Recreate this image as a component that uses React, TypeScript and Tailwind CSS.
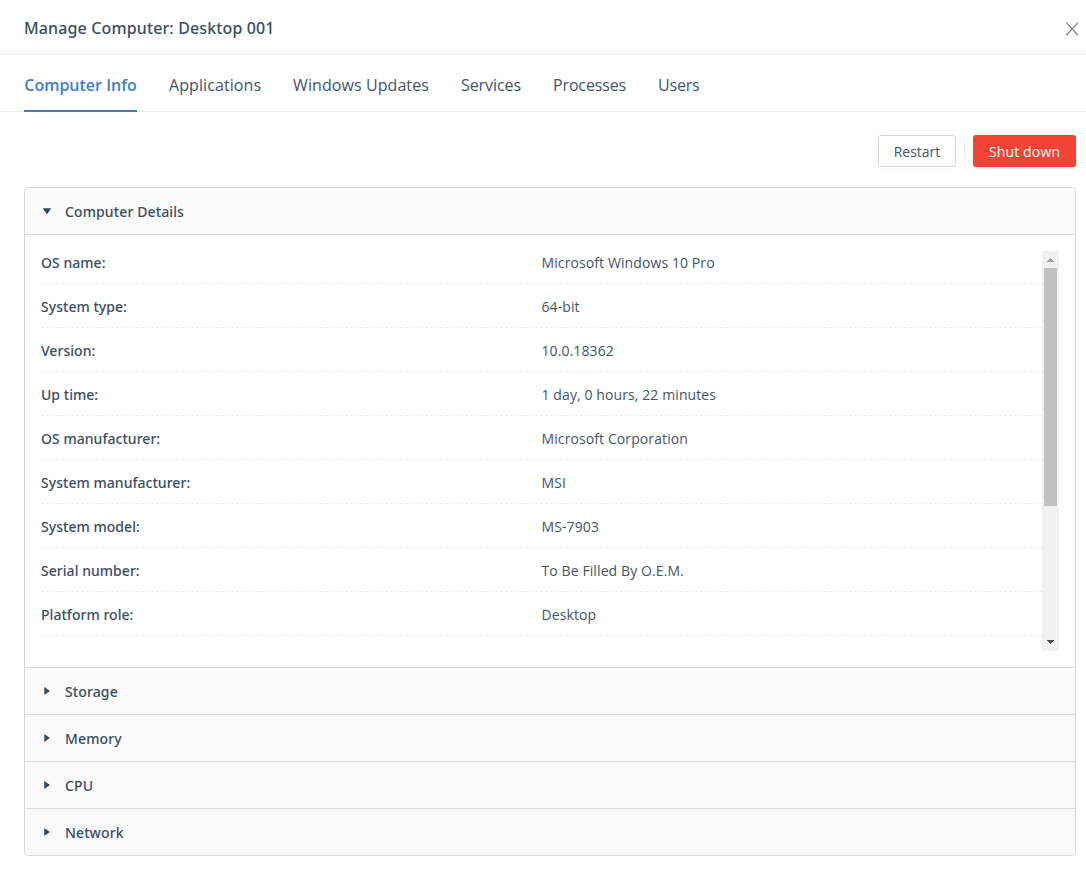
import React, { useState } from "react";
import clsx from "clsx";

const tabs = [
    { label: "Computer Info", className: "w-[113px]" },
    { label: "Applications", className: "w-[92px] tracking-[0.08px]" },
    { label: "Windows Updates", className: "w-[136px] tracking-[0.08px]" },
    { label: "Services", className: "w-[60px] tracking-[-0.08px]" },
    { label: "Processes", className: "w-[73px] tracking-[-0.16px]" },
    { label: "Users", className: "w-[41px] tracking-[-0.2px]" },
];

const details = [
    { label: "OS name:", value: "Microsoft Windows 10 Pro" },
    { label: "System type:", value: "64-bit" },
    { label: "Version:", value: "10.0.18362" },
    { label: "Up time:", value: "1 day, 0 hours, 22 minutes" },
    { label: "OS manufacturer:", value: "Microsoft Corporation" },
    { label: "System manufacturer:", value: "MSI" },
    { label: "System model:", value: "MS-7903" },
    { label: "Serial number:", value: "To Be Filled By O.E.M." },
    { label: "Platform role:", value: "Desktop" },
];

const sections = ["Storage", "Memory", "CPU", "Network"];

const Caret = ({ open = false }: { open?: boolean }) => (
    <svg width="10" height="10" viewBox="0 0 10 10" className="shrink-0 fill-[#34495e]">
        {open ? <path d="M.8 2.2h8.4L5.6 7.6a.7.7 0 0 1-1.2 0z" /> : <path d="M2.3 1v8l5-3.5a.6.6 0 0 0 0-1z" />}
    </svg>
);

const PanelHeader = ({ title, open }: { title: string; open?: boolean }) => (
    <button className="flex h-[46px] w-full items-center gap-[13px] bg-[#fafafa] pl-[17px] text-left font-['Noto_Sans',sans-serif] font-medium tracking-[0.12px]">
        <Caret open={open} />
        <span className="pt-[2px]">{title}</span>
    </button>
);

const Scrollbar = () => (
    <div className="flex w-[17px] shrink-0 flex-col items-center bg-[#f1f1f1]">
        <svg width="17" height="17" viewBox="0 0 17 17" shapeRendering="crispEdges" className="shrink-0 fill-[#a3a3a3]">
            <path d="M8 7h1v1h1v1h1v1h1v1H5v-1h1V9h1V8h1z" />
        </svg>
        <div className="h-[238px] w-[13px] bg-[#c1c1c1]" />
        <svg width="17" height="17" viewBox="0 0 17 17" shapeRendering="crispEdges" className="mt-auto shrink-0 fill-[#505050]">
            <path d="M5 6h7v1h-1v1h-1v1H9v1H8V9H7V8H6V7H5z" />
        </svg>
    </div>
);

export default function App() {
    const [active, setActive] = useState("Computer Info");

    return (
        <div className="h-[872px] w-[1086px] overflow-hidden bg-white font-['Open_Sans','Noto_Sans',sans-serif] text-[14px] leading-[22px] text-[#3b4d61]">
            <header className="flex h-[55px] items-center justify-between border-b border-[#ececec] pr-[7px] pl-6">
                <h1 className="pt-[2px] font-['Noto_Sans',sans-serif] text-[16px] font-medium tracking-[0.13px]">
                    Manage Computer: Desktop 001
                </h1>
                <button aria-label="Close" className="pt-[3px]">
                    <svg width="14" height="14" viewBox="0 0 14 14" className="fill-none stroke-[#858585] stroke-[1.3]">
                        <path d="M1.3.6l11.6 12.6M12.9.6L1.3 13.2" />
                    </svg>
                </button>
            </header>

            <nav className="flex h-[57px] gap-8 border-b border-[#ececec] pl-6 text-[16px] text-[#445568]">
                {tabs.map((tab) => (
                    <button
                        key={tab.label}
                        onClick={() => setActive(tab.label)}
                        className={clsx(
                            "h-[57px] border-b-2 pt-[5px] whitespace-nowrap",
                            tab.className,
                            active === tab.label ? "border-[#3f7dcd] font-semibold text-[#3f7dcd]" : "border-transparent",
                        )}
                    >
                        {tab.label}
                    </button>
                ))}
            </nav>

            <main className="pt-[23px] pr-[10px] pl-6">
                <div className="mb-5 flex h-8 items-center justify-end gap-2">
                    <button className="h-8 w-[78px] rounded-[3px] border border-[#d9d9d9] pt-[2px] text-[#445568] shadow-[0_2px_0_rgba(0,0,0,0.015)]">
                        Restart
                    </button>
                    <span className="h-[14px] w-px bg-[#e8e8e8]" />
                    <button className="h-8 w-[103px] rounded-[3px] bg-[#f44336] pt-[2px] tracking-[0.15px] text-white shadow-[0_2px_0_rgba(0,0,0,0.045)]">
                        Shut down
                    </button>
                </div>

                <div className="overflow-hidden rounded-[4px] border border-[#d9d9d9]">
                    <PanelHeader title="Computer Details" open />
                    <div className="border-t border-[#d9d9d9] p-4">
                        <div className="flex h-[400px]">
                            <dl className="flex-1">
                                {details.map((row) => (
                                    <div
                                        key={row.label}
                                        className="grid h-11 grid-cols-2 border-b border-dashed border-[#ececec] pt-3 first:h-[33px] first:pt-px"
                                    >
                                        <dt className="font-['Noto_Sans',sans-serif] font-medium tracking-[0.04px]">{row.label}</dt>
                                        <dd className="tracking-[0.1px] text-[#445568]">{row.value}</dd>
                                    </div>
                                ))}
                            </dl>
                            <Scrollbar />
                        </div>
                    </div>
                    {sections.map((title) => (
                        <div key={title} className="border-t border-[#d9d9d9]">
                            <PanelHeader title={title} />
                        </div>
                    ))}
                </div>
            </main>
        </div>
    );
}
